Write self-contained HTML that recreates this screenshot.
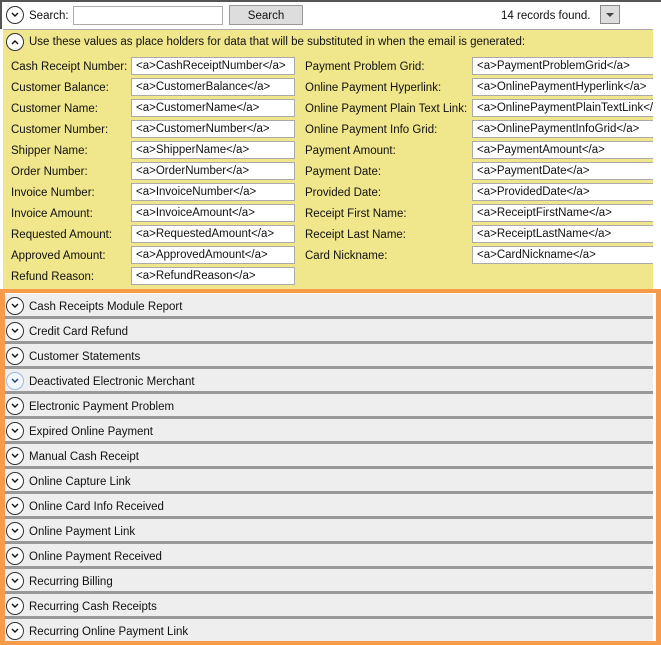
<!DOCTYPE html>
<html><head><style>
*{box-sizing:border-box;margin:0;padding:0}
body{width:661px;height:645px;background:#fff;font-family:"Liberation Sans",sans-serif;font-size:11.5px;color:#111;position:relative;overflow:hidden}
.abs{position:absolute}
.circ{position:absolute;width:18px;height:18px;border:1px solid #333;border-radius:50%;background:#fff}
.circ svg{position:absolute;left:3px;top:4px}
.top{left:0;top:0;width:661px;height:29px;border-left:2px solid #555;border-top:2px solid #555;background:#fff}
.yel{left:3px;top:29px;width:650px;height:260px;background:#f0e68c;border-top:1px solid #aaa}
.lbl{position:absolute;white-space:nowrap;padding-top:2px}
.inp{position:absolute;height:18px;background:#fff;border:1px solid #aaa;padding-left:4px;line-height:17px;white-space:nowrap;overflow:hidden}
.clip{position:absolute;left:0;top:0;width:653px;height:290px;overflow:hidden}
.orange{left:0;top:289px;width:661px;height:356px;border:5px solid #f79a49;border-top-width:4px;border-bottom-width:4px;background:#fff}
.row{position:absolute;left:0;width:648px;height:25px;background:#eee;border-bottom:3px solid #999}
.row span{position:absolute;left:24px;top:7px}
.row .circ{left:1px;top:3px}
</style></head><body>
<div class="abs top"></div>
<div class="circ" style="left:6px;top:6px"><svg width="10" height="8"><path d="M2 2 L5 5 L8 2" stroke="#111" stroke-width="1.4" fill="none"/></svg></div>
<div class="lbl" style="left:29px;top:8px">Search:</div>
<div class="inp" style="left:73px;top:6px;width:150px;height:19px"></div>
<div class="abs" style="left:229px;top:5px;width:74px;height:20px;background:#ddd;border:1px solid #999;text-align:center;line-height:20px">Search</div>
<div class="lbl" style="left:501px;top:8px">14 records found.</div>
<div class="abs" style="left:600px;top:5px;width:20px;height:19px;background:#ddd;border:1px solid #888"><svg width="18" height="17"><path d="M5 7 L13 7 L9 11Z" fill="#444"/></svg></div>
<div class="abs yel"></div>
<div class="circ" style="left:6px;top:33px"><svg width="10" height="8"><path d="M2 6 L5 3 L8 6" stroke="#111" stroke-width="1.4" fill="none"/></svg></div>
<div class="lbl" style="left:29px;top:34px">Use these values as place holders for data that will be substituted in when the email is generated:</div>
<div class="clip">
<div class="lbl" style="left:11px;top:59px">Cash Receipt Number:</div><div class="inp" style="left:131px;top:57px;width:164px">&lt;a&gt;CashReceiptNumber&lt;/a&gt;</div>
<div class="lbl" style="left:11px;top:80px">Customer Balance:</div><div class="inp" style="left:131px;top:78px;width:164px">&lt;a&gt;CustomerBalance&lt;/a&gt;</div>
<div class="lbl" style="left:11px;top:101px">Customer Name:</div><div class="inp" style="left:131px;top:99px;width:164px">&lt;a&gt;CustomerName&lt;/a&gt;</div>
<div class="lbl" style="left:11px;top:122px">Customer Number:</div><div class="inp" style="left:131px;top:120px;width:164px">&lt;a&gt;CustomerNumber&lt;/a&gt;</div>
<div class="lbl" style="left:11px;top:143px">Shipper Name:</div><div class="inp" style="left:131px;top:141px;width:164px">&lt;a&gt;ShipperName&lt;/a&gt;</div>
<div class="lbl" style="left:11px;top:164px">Order Number:</div><div class="inp" style="left:131px;top:162px;width:164px">&lt;a&gt;OrderNumber&lt;/a&gt;</div>
<div class="lbl" style="left:11px;top:185px">Invoice Number:</div><div class="inp" style="left:131px;top:183px;width:164px">&lt;a&gt;InvoiceNumber&lt;/a&gt;</div>
<div class="lbl" style="left:11px;top:206px">Invoice Amount:</div><div class="inp" style="left:131px;top:204px;width:164px">&lt;a&gt;InvoiceAmount&lt;/a&gt;</div>
<div class="lbl" style="left:11px;top:227px">Requested Amount:</div><div class="inp" style="left:131px;top:225px;width:164px">&lt;a&gt;RequestedAmount&lt;/a&gt;</div>
<div class="lbl" style="left:11px;top:248px">Approved Amount:</div><div class="inp" style="left:131px;top:246px;width:164px">&lt;a&gt;ApprovedAmount&lt;/a&gt;</div>
<div class="lbl" style="left:11px;top:269px">Refund Reason:</div><div class="inp" style="left:131px;top:267px;width:164px">&lt;a&gt;RefundReason&lt;/a&gt;</div>

<div class="lbl" style="left:305px;top:59px">Payment Problem Grid:</div><div class="inp" style="left:472px;top:57px;width:200px">&lt;a&gt;PaymentProblemGrid&lt;/a&gt;</div>
<div class="lbl" style="left:305px;top:80px">Online Payment Hyperlink:</div><div class="inp" style="left:472px;top:78px;width:200px">&lt;a&gt;OnlinePaymentHyperlink&lt;/a&gt;</div>
<div class="lbl" style="left:305px;top:101px">Online Payment Plain Text Link:</div><div class="inp" style="left:472px;top:99px;width:200px">&lt;a&gt;OnlinePaymentPlainTextLink&lt;/a&gt;</div>
<div class="lbl" style="left:305px;top:122px">Online Payment Info Grid:</div><div class="inp" style="left:472px;top:120px;width:200px">&lt;a&gt;OnlinePaymentInfoGrid&lt;/a&gt;</div>
<div class="lbl" style="left:305px;top:143px">Payment Amount:</div><div class="inp" style="left:472px;top:141px;width:200px">&lt;a&gt;PaymentAmount&lt;/a&gt;</div>
<div class="lbl" style="left:305px;top:164px">Payment Date:</div><div class="inp" style="left:472px;top:162px;width:200px">&lt;a&gt;PaymentDate&lt;/a&gt;</div>
<div class="lbl" style="left:305px;top:185px">Provided Date:</div><div class="inp" style="left:472px;top:183px;width:200px">&lt;a&gt;ProvidedDate&lt;/a&gt;</div>
<div class="lbl" style="left:305px;top:206px">Receipt First Name:</div><div class="inp" style="left:472px;top:204px;width:200px">&lt;a&gt;ReceiptFirstName&lt;/a&gt;</div>
<div class="lbl" style="left:305px;top:227px">Receipt Last Name:</div><div class="inp" style="left:472px;top:225px;width:200px">&lt;a&gt;ReceiptLastName&lt;/a&gt;</div>
<div class="lbl" style="left:305px;top:248px">Card Nickname:</div><div class="inp" style="left:472px;top:246px;width:200px">&lt;a&gt;CardNickname&lt;/a&gt;</div>
</div>

<div class="abs orange">
<div class="row" style="top:1px"><div class="circ"><svg width="10" height="8"><path d="M2 2 L5 5 L8 2" stroke="#111" stroke-width="1.4" fill="none"/></svg></div><span>Cash Receipts Module Report</span></div>
<div class="row" style="top:26px"><div class="circ"><svg width="10" height="8"><path d="M2 2 L5 5 L8 2" stroke="#111" stroke-width="1.4" fill="none"/></svg></div><span>Credit Card Refund</span></div>
<div class="row" style="top:51px"><div class="circ"><svg width="10" height="8"><path d="M2 2 L5 5 L8 2" stroke="#111" stroke-width="1.4" fill="none"/></svg></div><span>Customer Statements</span></div>
<div class="row" style="top:76px"><div class="circ" style="border-color:#9bb8dd;background:#f3f8ff"><svg width="10" height="8"><path d="M2 2 L5 5 L8 2" stroke="#1a3c7a" stroke-width="1.4" fill="none"/></svg></div><span>Deactivated Electronic Merchant</span></div>
<div class="row" style="top:101px"><div class="circ"><svg width="10" height="8"><path d="M2 2 L5 5 L8 2" stroke="#111" stroke-width="1.4" fill="none"/></svg></div><span>Electronic Payment Problem</span></div>
<div class="row" style="top:126px"><div class="circ"><svg width="10" height="8"><path d="M2 2 L5 5 L8 2" stroke="#111" stroke-width="1.4" fill="none"/></svg></div><span>Expired Online Payment</span></div>
<div class="row" style="top:151px"><div class="circ"><svg width="10" height="8"><path d="M2 2 L5 5 L8 2" stroke="#111" stroke-width="1.4" fill="none"/></svg></div><span>Manual Cash Receipt</span></div>
<div class="row" style="top:176px"><div class="circ"><svg width="10" height="8"><path d="M2 2 L5 5 L8 2" stroke="#111" stroke-width="1.4" fill="none"/></svg></div><span>Online Capture Link</span></div>
<div class="row" style="top:201px"><div class="circ"><svg width="10" height="8"><path d="M2 2 L5 5 L8 2" stroke="#111" stroke-width="1.4" fill="none"/></svg></div><span>Online Card Info Received</span></div>
<div class="row" style="top:226px"><div class="circ"><svg width="10" height="8"><path d="M2 2 L5 5 L8 2" stroke="#111" stroke-width="1.4" fill="none"/></svg></div><span>Online Payment Link</span></div>
<div class="row" style="top:251px"><div class="circ"><svg width="10" height="8"><path d="M2 2 L5 5 L8 2" stroke="#111" stroke-width="1.4" fill="none"/></svg></div><span>Online Payment Received</span></div>
<div class="row" style="top:276px"><div class="circ"><svg width="10" height="8"><path d="M2 2 L5 5 L8 2" stroke="#111" stroke-width="1.4" fill="none"/></svg></div><span>Recurring Billing</span></div>
<div class="row" style="top:301px"><div class="circ"><svg width="10" height="8"><path d="M2 2 L5 5 L8 2" stroke="#111" stroke-width="1.4" fill="none"/></svg></div><span>Recurring Cash Receipts</span></div>
<div class="row" style="top:326px;height:22px;border-bottom:none"><div class="circ"><svg width="10" height="8"><path d="M2 2 L5 5 L8 2" stroke="#111" stroke-width="1.4" fill="none"/></svg></div><span>Recurring Online Payment Link</span></div>
</div>
</body></html>
